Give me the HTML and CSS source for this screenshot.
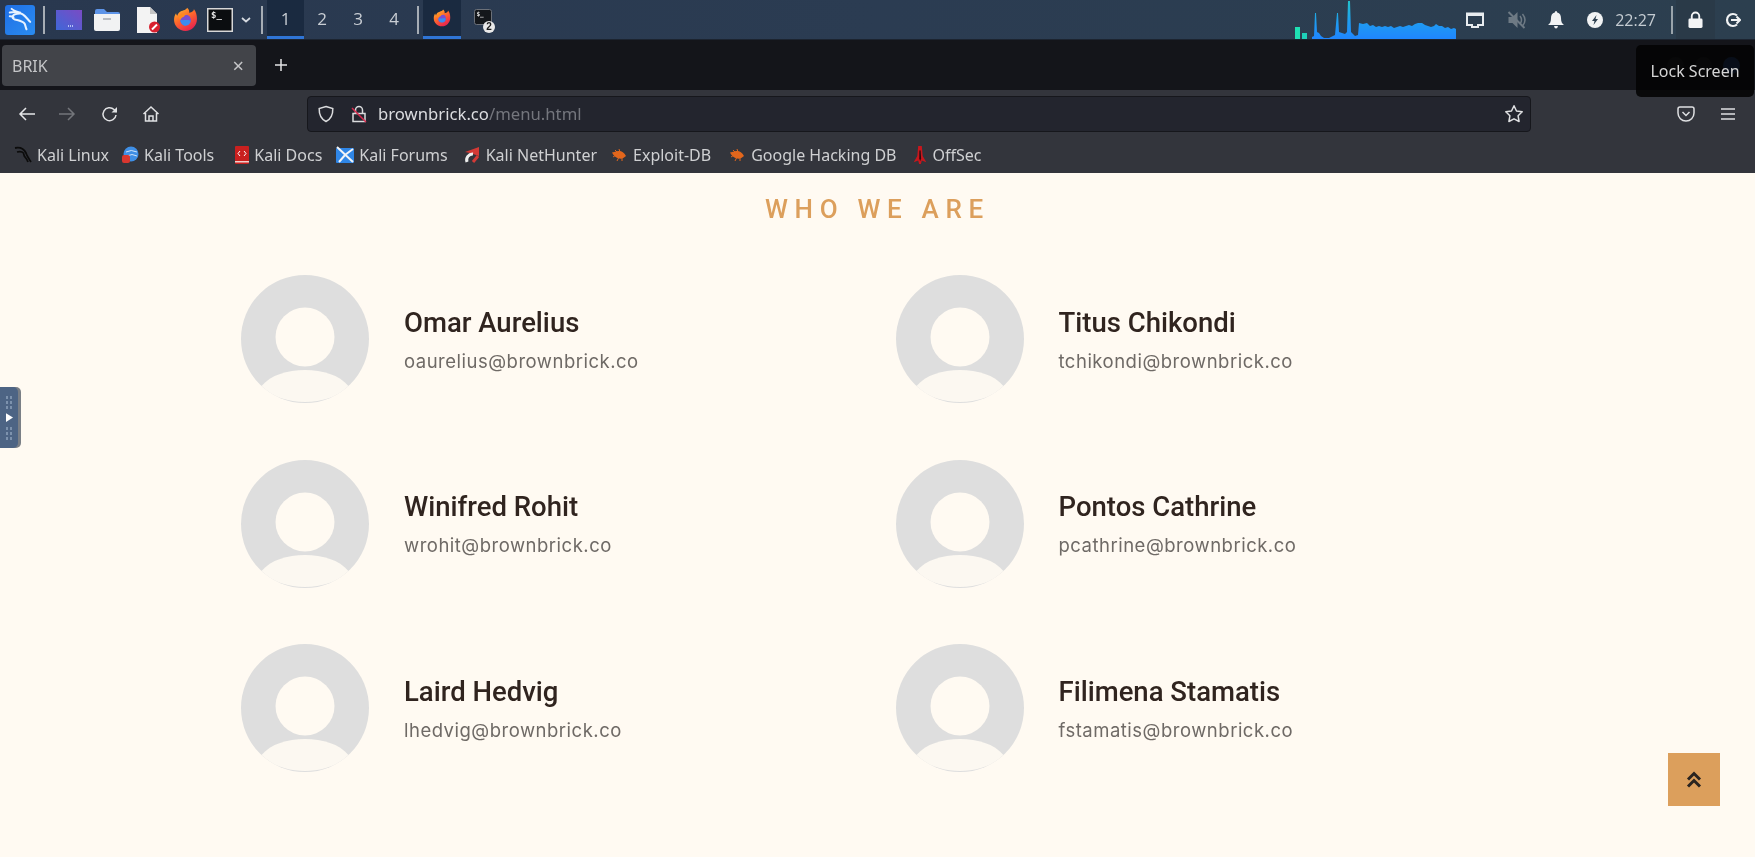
FILE: index.html
```html
<!DOCTYPE html>
<html lang="en">
<head>
<meta charset="utf-8">
<title>BRIK</title>
<link rel="stylesheet" href="styles.css">
</head>
<body>
<svg class="defs" width="0" height="0" aria-hidden="true">
  <defs>
    <linearGradient id="ffbody" x1="0" y1="0" x2="0.6" y2="1"><stop offset="0" stop-color="#ffc52e"/><stop offset=".5" stop-color="#ff6b2a"/><stop offset="1" stop-color="#e8254f"/></linearGradient>
    <linearGradient id="graphblue" gradientUnits="userSpaceOnUse" x1="0" y1="0" x2="0" y2="39"><stop offset="0" stop-color="#22c3c9"/><stop offset=".55" stop-color="#1f9df0"/><stop offset="1" stop-color="#1f86ff"/></linearGradient>
    <symbol id="firefox" viewBox="0 0 24 24">
      <path fill="url(#ffbody)" d="M12 23C5.9 23 1 18.2 1 12.2c0-2.2.7-4.4 1.9-6.1.2 1 .6 1.8 1.2 2.4.3-1.5 1.2-2.8 2.4-3.7C8.300 3.500 12.500 3.400 13.500.8c2 1.500 2.300 3.300 2 4.700C18.500 5.400 20.300 3.500 20 2c2.300 2.700 3 6 3 9.500C23 18 18 23 12 23z"/>
      <circle cx="12" cy="12.500" r="5.200" fill="#7a4fd0"/>
      <path fill="#3b8cf0" d="M7 12c1.500 1 3.500.5 5 .5s3.500-.5 5 .5c-.3 3-2.300 5-5 5s-4.800-2.500-5-6z"/>
      <path fill="#ff8a1f" d="M5.500 9c2-2.500 6-3.500 9-2-2 .1-3.500 1-4 2.300-1.800.5-3.300 1.800-3.500 3.700-.5-1.300-1.600-2.600-1.500-4z"/>
    </symbol>
    <symbol id="avatar" viewBox="0 0 128 128">
      <circle cx="64" cy="64" r="64" fill="#dedede"/>
      <circle cx="64" cy="62" r="29.500" fill="#fffaf2"/>
      <path fill="#fcf8f1" d="M20.500 111C30 100 46 95 64 95s34 5 43.500 16C96 122 81 127 64 127s-32-5-43.500-16z"/>
    </symbol>
    <symbol id="bug" viewBox="0 0 18 18">
      <path fill="#e2661c" d="M2 6.500 8 5c3-.5 6 1 8 5-2 2-4.500 3-7 2.500C6 12 3.500 9.500 2 6.500z"/>
      <path fill="none" stroke="#e2661c" stroke-width="1" d="M5 4 7 6M9 3l1 3M3 11l3-2M7 15l2-4M12 15l0-3"/>
    </symbol>
  </defs>
</svg>

<header class="taskbar">
  <div class="task-left">
    <span class="kali-start">
      <svg class="ico-kali" viewBox="0 0 28 28"><path fill="none" stroke="#e8f3ff" stroke-width="2.200" stroke-linecap="round" d="M3 6c5-1 10-1 14 2 3 2 5 5 8 8M14 7c-5 0-8 1-8 4 0 4 9 2 13 7 1 2 1 4 2 6M5 2c2 2 6 3 9 4M3 10c2 0 3 0 4 1"/></svg>
    </span>
    <span class="sep sep-start"></span>
    <svg class="launch launch-desk" viewBox="0 0 26 20"><defs><linearGradient id="deskg" x1="0" y1="1" x2="1" y2="0"><stop offset="0" stop-color="#3f67d8"/><stop offset="1" stop-color="#7a4bc4"/></linearGradient></defs><rect width="26" height="20" fill="url(#deskg)"/><path d="M12 16h5" stroke="#cfe0ff" stroke-dasharray="1 1" stroke-width="1.500"/></svg>
    <svg class="launch launch-folder" viewBox="0 0 26 22"><path fill="#5d94e8" d="M1 2q0-2 2-2h7l3 3h11q2 0 2 2v2H1z"/><path fill="#f1f2f3" d="M0 5h26v15q0 2-2 2H2q-2 0-2-2z"/><path d="M9 10h8" stroke="#b9bcc1" stroke-width="2"/></svg>
    <svg class="launch launch-doc" viewBox="0 0 24 26"><path fill="#f3f3f3" d="M1 0h13l7 7v19H1z"/><path fill="#c4c4c4" d="M14 0l7 7h-7z"/><circle cx="18.500" cy="20" r="5.500" fill="#d8202f"/><path d="M16 22.500l5-5" stroke="#fff" stroke-width="2"/></svg>
    <svg class="launch launch-ff"><use href="#firefox"/></svg>
    <svg class="launch launch-term" viewBox="0 0 26 24"><rect x=".75" y=".75" width="24.500" height="22.500" fill="#0b0d10" stroke="#d8d8d8" stroke-width="1.500"/><text x="4" y="10" class="term-glyph">$_</text></svg>
    <svg class="chev" viewBox="0 0 10 6"><path fill="none" stroke="#d6dae0" stroke-width="1.700" d="M1 1l4 3.500L9 1"/></svg>
    <span class="sep sep-work"></span>
    <div class="workspaces">
      <span class="ws ws-active">1</span><span class="ws">2</span><span class="ws">3</span><span class="ws">4</span>
    </div>
    <span class="sep sep-task"></span>
    <span class="task task-active"><svg class="task-ff"><use href="#firefox"/></svg></span>
    <span class="task task-term">
      <svg class="task-term-ico" viewBox="0 0 18 18"><rect x=".5" y=".5" width="17" height="15" rx="2" fill="#14171b" stroke="#6b7078"/><text x="2.500" y="7" class="term-glyph-sm">$_</text></svg>
      <span class="badge">2</span>
    </span>
  </div>
  <div class="task-right">
    <svg class="graph" viewBox="0 0 161 39" preserveAspectRatio="none">
      <rect x="0" y="27" width="5" height="12" fill="#1fe0b4"/>
      <rect x="7" y="33" width="5" height="6" fill="#1ed0ba"/>
      <path fill="url(#graphblue)" d="M17 39V37L19 36 20 13H21L22 32 24 33 26 36 29 38H34L36 37 40 35 42 13H43L44 32 50 34 52 32 53 1H55L56 32 60 36 63 35 64 23 68 24 72 23 75 26 78 25 81 27 84 26 87 27 90 26 93 27 96 26 99 28 102 27 105 26 108 27 111 26 114 25 117 26 120 24 123 23 127 23 130 25 133 26 136 27 139 26 141 24 144 26 147 26 150 28 153 27 156 29 159 28 161 29V39z"/>
    </svg>
    <svg class="tray tray-net" viewBox="0 0 18 16"><path fill="none" stroke="#e8ecef" stroke-width="2" d="M1 1.500h16V13h-5v2H6v-2H1z"/><path fill="#e8ecef" d="M1 1h16v3H1z"/></svg>
    <svg class="tray tray-mute" viewBox="0 0 20 20"><path fill="#6e7a84" d="M2 7h4l5-5v16l-5-5H2z"/><path d="M2 2l16 16" stroke="#6e7a84" stroke-width="2"/><path d="M13.500 6q3 4 0 8M16 4q5 6 0 12" fill="none" stroke="#6e7a84" stroke-width="1.500"/></svg>
    <svg class="tray tray-bell" viewBox="0 0 16 18"><path fill="#f1f3f4" d="M8 0q1.200 0 1.200 1.500C12 2.200 13 4.500 13 7c0 4 1 5.500 3 7H0c2-1.500 3-3 3-7 0-2.500 1-4.800 3.800-5.500Q6.800 0 8 0zM6 15h4q-.5 2.500-2 2.500T6 15z"/></svg>
    <svg class="tray tray-power" viewBox="0 0 16 16"><circle cx="8" cy="8" r="8" fill="#f1f3f4"/><path fill="#2e4050" d="M9.500 3 5 9h2.500L6.500 13 11 7H8.500z"/></svg>
    <span class="clock">22:27</span>
    <span class="sep sep-clock"></span>
    <span class="lock-cell"><svg class="tray-lock" viewBox="0 0 16 18"><path fill="none" stroke="#f3f4f5" stroke-width="2" d="M4 8V5a4 4 0 0 1 8 0v3"/><rect x="0.500" y="7.500" width="15" height="10" rx="1.500" fill="#f3f4f5"/></svg></span>
    <svg class="tray-logout" viewBox="0 0 16 16"><path fill="none" stroke="#f1f3f4" stroke-width="2.200" d="M12 3.500A6 6 0 1 0 12 12.500"/><path d="M6 8h9M11.500 4.500 15 8l-3.500 3.500" fill="none" stroke="#f1f3f4" stroke-width="2"/></svg>
  </div>
</header>

<div class="tabbar">
  <div class="tab"><span class="tab-title">BRIK</span><span class="tab-close">×</span></div>
  <svg class="tab-new" viewBox="0 0 14 14"><path d="M7 1v12M1 7h12" stroke="#e3e4e6" stroke-width="1.500"/></svg>
  <div class="win-controls"><span class="win-btn"></span><span class="win-btn"></span><span class="win-btn win-btn-close"></span></div>
</div>

<div class="navbar">
  <svg class="nav nav-back" viewBox="0 0 18 16"><path d="M17 8H2M8 2 2 8l6 6" fill="none" stroke="#e6e7e9" stroke-width="1.500"/></svg>
  <svg class="nav nav-fwd" viewBox="0 0 18 16"><path d="M1 8h15M10 2l6 6-6 6" fill="none" stroke="#74767b" stroke-width="1.500"/></svg>
  <svg class="nav nav-reload" viewBox="0 0 18 18"><path d="M15 10a6.500 6.500 0 1 1-2-5.500l2.500 2.500" fill="none" stroke="#e0e1e3" stroke-width="1.500"/><path d="M16 2v5.500h-5.500z" fill="#e0e1e3"/></svg>
  <svg class="nav nav-home" viewBox="0 0 18 18"><path d="M1.500 9 9 2l7.500 7M3.500 8v8h11V8M7 16v-5h4v5" fill="none" stroke="#e0e1e3" stroke-width="1.500"/></svg>
  <div class="urlbar">
    <svg class="url-shield" viewBox="0 0 16 18"><path d="M8 1.500 14.800 3.500c.2 6-1.800 10.500-6.800 13-5-2.500-7-7-6.800-13z" fill="none" stroke="#dadbdd" stroke-width="1.500"/></svg>
    <svg class="url-lock" viewBox="0 0 16 18"><path d="M4.500 8V5a3.500 3.500 0 0 1 7 0v3M2 8.500h12v8H2z" fill="none" stroke="#dadbdd" stroke-width="1.500"/><path d="M1 3l14 14" stroke="#d82a4e" stroke-width="1.500"/></svg>
    <span class="url-text"><span class="url-host">brownbrick.co</span><span class="url-path">/menu.html</span></span>
    <svg class="url-star" viewBox="0 0 20 19"><path d="M10 1.800 12.500 7l5.700.8-4.100 4 1 5.700-5.100-2.700-5.100 2.700 1-5.700-4.100-4L7.500 7z" fill="none" stroke="#dfe0e2" stroke-width="1.500" stroke-linejoin="round"/></svg>
  </div>
  <svg class="nav nav-pocket" viewBox="0 0 18 16"><path d="M1 3q0-2 2-2h12q2 0 2 2v4a8 8 0 0 1-16 0z" fill="none" stroke="#dfe0e2" stroke-width="1.500"/><path d="M5.500 6 9 9.500 12.500 6" fill="none" stroke="#dfe0e2" stroke-width="1.500"/></svg>
  <svg class="nav nav-menu" viewBox="0 0 16 14"><path d="M1 2h14M1 7h14M1 12h14" stroke="#dfe0e2" stroke-width="1.500"/></svg>
</div>

<nav class="bookmarks">
  <a class="bm bm-linux"><svg class="bm-ico" viewBox="0 0 18 18"><path d="M1 2c5-1 9 1 11 5 1 3 3 6 5 9M3 6c4-1 7 0 7 3 0 2 3 3 4 7" fill="none" stroke="#0c0c0c" stroke-width="1.800"/></svg>Kali Linux</a>
  <a class="bm bm-tools"><svg class="bm-ico" viewBox="0 0 18 18"><circle cx="10" cy="8" r="7.500" fill="#3f8fe6"/><path d="M5 6q5-3 11 0M6 10q5-3 10 0" stroke="#cfe4fb" fill="none"/><rect x="1" y="9" width="8" height="8" rx="2" fill="#d9362f"/></svg>Kali Tools</a>
  <a class="bm bm-docs"><svg class="bm-ico-narrow" viewBox="0 0 14 18"><rect width="14" height="18" rx="1" fill="#c9201f"/><rect y="15" width="14" height="1.500" fill="#f1d0cc"/><path d="M5 5 3 7.500 5 10M9 5l2 2.500L9 10" stroke="#fff" fill="none"/></svg>Kali Docs</a>
  <a class="bm bm-forums"><svg class="bm-ico" viewBox="0 0 18 18"><rect y="2" width="18" height="15" rx="1" fill="#2f86e6"/><path d="M1 1 17 16M17 3l-8 6-6 7" stroke="#f1f4f8" stroke-width="2" fill="none"/></svg>Kali Forums</a>
  <a class="bm bm-hunter"><svg class="bm-ico" viewBox="0 0 18 18"><path d="M2 6 16 1v9L7 7z" fill="#d43a36"/><path d="M4 16a6 6 0 0 1 6-8" stroke="#eee" stroke-width="3" fill="none"/><path d="M10 16l5-6" stroke="#d43a36" stroke-width="3"/></svg>Kali NetHunter</a>
  <a class="bm bm-exploit"><svg class="bm-ico-bug"><use href="#bug"/></svg>Exploit-DB</a>
  <a class="bm bm-ghdb"><svg class="bm-ico-bug"><use href="#bug"/></svg>Google Hacking DB</a>
  <a class="bm bm-offsec"><svg class="bm-ico-narrow" viewBox="0 0 14 20"><path d="M5 0h4l1 11 4 7-5-2-1 4h-2l-1-4-5 2 4-7z" fill="#c8171d"/><path d="M6.300 5h1.400l.5 9-1 3-1-3z" fill="#2a0c0e"/></svg>OffSec</a>
</nav>

<main class="page">
  <h2 class="page-title">WHO WE ARE</h2>
  <section class="team">
    <article class="member"><svg class="avatar"><use href="#avatar"/></svg><div><h3 class="name">Omar Aurelius</h3><p class="mail">oaurelius@brownbrick.co</p></div></article>
    <article class="member"><svg class="avatar"><use href="#avatar"/></svg><div><h3 class="name">Titus Chikondi</h3><p class="mail">tchikondi@brownbrick.co</p></div></article>
    <article class="member"><svg class="avatar"><use href="#avatar"/></svg><div><h3 class="name">Winifred Rohit</h3><p class="mail">wrohit@brownbrick.co</p></div></article>
    <article class="member"><svg class="avatar"><use href="#avatar"/></svg><div><h3 class="name">Pontos Cathrine</h3><p class="mail">pcathrine@brownbrick.co</p></div></article>
    <article class="member"><svg class="avatar"><use href="#avatar"/></svg><div><h3 class="name">Laird Hedvig</h3><p class="mail">lhedvig@brownbrick.co</p></div></article>
    <article class="member"><svg class="avatar"><use href="#avatar"/></svg><div><h3 class="name">Filimena Stamatis</h3><p class="mail">fstamatis@brownbrick.co</p></div></article>
  </section>
</main>

<a class="to-top"><svg viewBox="0 0 16 18"><path d="M2 8.500l6-6 6 6M2 15.500l6-6 6 6" fill="none" stroke="#2a2420" stroke-width="3"/></svg></a>

<div class="side-handle">
  <span class="dots"></span>
  <svg class="side-arrow" viewBox="0 0 8 10"><path d="M0 0l8 5-8 5z" fill="#fff"/></svg>
  <span class="dots"></span>
</div>

<div class="tooltip">Lock Screen</div>
</body>
</html>
```
FILE: styles.css
```css
* { box-sizing: border-box; }
html, body { margin: 0; height: 100%; }
body {
  width: 1755px;
  height: 857px;
  overflow: hidden;
  display: flex;
  flex-direction: column;
  font-family: "Noto Sans", sans-serif;
  background: #fffaf2;
  position: relative;
  filter: blur(0.4px);
}
.defs { position: absolute; }
svg { display: block; flex: none; }

/* desktop panel */
.taskbar {
  height: 40px;
  flex: none;
  display: flex;
  justify-content: space-between;
  background: linear-gradient(90deg, #29384f 0%, #2b3c52 50%, #2c3f4f 100%);
  border-bottom: 1px solid #1c2430;
}
.task-left, .task-right { display: flex; align-items: center; }
.kali-start {
  width: 30px; height: 30px; margin-left: 5px;
  background: linear-gradient(135deg, #1f6fe6, #2a8cf0);
  display: flex; align-items: center; justify-content: center;
  border-radius: 3px;
}
.ico-kali { width: 26px; height: 26px; }
.sep { width: 2px; height: 28px; background: #a6adb5; }
.sep-start { margin-left: 8px; }
.launch-desk { width: 26px; height: 20px; margin-left: 11px; }
.launch-folder { width: 26px; height: 22px; margin-left: 12px; }
.launch-doc { width: 24px; height: 26px; margin-left: 16px; }
.launch-ff { width: 25px; height: 25px; margin-left: 13px; }
.launch-term { width: 26px; height: 24px; margin-left: 9px; }
.term-glyph { font: 700 9px "DejaVu Sans Mono", monospace; fill: #e8e8e8; }
.term-glyph-sm { font: 700 6px "DejaVu Sans Mono", monospace; fill: #e8e8e8; }
.chev { width: 10px; height: 6px; margin-left: 8px; }
.sep-work { margin-left: 10px; }
.workspaces { display: flex; height: 39px; margin-left: 4px; }
.ws {
  width: 36px; display: flex; align-items: center; justify-content: center;
  font: 17px "Open Sans", sans-serif; color: #c9ced4;
  border-bottom: 3px solid transparent;
}
.ws-active { background: #1a2a40; border-bottom-color: #2f75d6; width: 37px; }
.sep-task { margin-left: 5px; }
.task {
  height: 39px; display: flex; align-items: center; justify-content: center;
  position: relative; border-bottom: 3px solid transparent;
}
.task-active { width: 38px; margin-left: 4px; background: #1a2a40; border-bottom-color: #2f75d6; }
.task-ff { width: 18px; height: 18px; }
.task-term { width: 22px; margin-left: 11px; }
.task-term-ico { width: 18px; height: 18px; }
.badge {
  position: absolute; right: -1px; bottom: 3px; width: 12px; height: 12px;
  border-radius: 50%; background: #e9e9e9; color: #1a1a1a;
  font: 700 10px/12px "Liberation Sans", sans-serif; text-align: center;
}
.graph { width: 161px; height: 39px; }
.tray-net { width: 18px; height: 16px; margin-left: 10px; }
.tray-mute { width: 21px; height: 20px; margin-left: 22px; }
.tray-bell { width: 16px; height: 18px; margin-left: 21px; }
.tray-power { width: 16px; height: 16px; margin-left: 23px; }
.clock { font: 16px "Open Sans", sans-serif; color: #c5ccd2; margin-left: 12px; }
.sep-clock { margin-left: 15px; background: #9aa4ab; }
.lock-cell {
  width: 39px; height: 39px; margin-left: 3px; background: #2a3a48;
  display: flex; align-items: center; justify-content: center;
}
.tray-lock { width: 15px; height: 18px; }
.tray-logout { width: 16px; height: 16px; margin-left: 10px; margin-right: 14px; }

/* browser chrome */
.tabbar {
  height: 50px; flex: none; display: flex; align-items: center;
  background: #14151a; padding: 0 15px 0 2px;
}
.tab {
  width: 254px; height: 41px; border-radius: 4px; background: #424449;
  display: flex; align-items: center; justify-content: space-between;
  padding: 2px 12px 0 10px;
  font-size: 16px; color: #c4c5c7;
}
.tab-close { font-size: 20px; color: #c4c5c7; line-height: 1; }
.tab-new { width: 14px; height: 14px; margin-left: 18px; }
.win-controls { display: flex; gap: 11px; margin-left: auto; }
.win-btn { width: 17px; height: 17px; border-radius: 50%; background: #2a2b31; }
.win-btn-close { background: #2b5fb0; }

.navbar {
  height: 44px; flex: none; display: flex; align-items: center;
  background: #33353c; padding: 3px 18px 0 18px;
}
.nav-back, .nav-fwd { width: 18px; height: 16px; }
.nav-fwd { margin-left: 22px; }
.nav-reload { width: 18px; height: 18px; margin-left: 25px; }
.nav-home { width: 18px; height: 18px; margin-left: 23px; }
.urlbar {
  width: 1224px; height: 36px; margin-left: 147px;
  background: #23252e; border: 1px solid #16171c; border-radius: 4px;
  display: flex; align-items: center; padding: 0 6px 0 10px;
}
.url-shield { width: 16px; height: 18px; }
.url-lock { width: 16px; height: 18px; margin-left: 17px; }
.url-text { margin-left: 11px; font-size: 16.700px; flex: 1; }
.url-host { color: #dcdde0; }
.url-path { color: #74767d; }
.url-star { width: 20px; height: 19px; }
.nav-pocket { width: 18px; height: 16px; margin-left: 146px; }
.nav-menu { width: 16px; height: 14px; margin-left: 25px; }

.bookmarks {
  height: 39px; flex: none; display: flex; align-items: center;
  background: #33353c; padding: 3px 0 0 14px;
  font-size: 16px; color: #cfd0d2;
}
.bm { display: flex; align-items: center; gap: 5px; }
.bm-tools { margin-left: 12px; }
.bm-docs { margin-left: 21px; }
.bm-forums { margin-left: 14px; }
.bm-hunter { margin-left: 15px; }
.bm-exploit { margin-left: 13px; }
.bm-ghdb { margin-left: 17px; }
.bm-offsec { margin-left: 17px; }
.bm-ico { width: 18px; height: 18px; }
.bm-ico-narrow { width: 14px; height: 18px; }
.bm-ico-bug { width: 18px; height: 18px; }

/* page */
.page { flex: 1; background: #fffaf2; padding: 21px 0 0 241px; min-height: 0; }
.page-title {
  margin: 0 0 0 -241px;
  text-align: center;
  font: 500 26px/30px Roboto, sans-serif;
  letter-spacing: 6.700px;
  color: #dc9f5c;
}
.team {
  display: grid;
  grid-template-columns: 654.500px 1fr;
  row-gap: 56.500px;
  margin-top: 51px;
}
.member { display: flex; align-items: center; gap: 35px; }
.avatar { width: 128px; height: 128px; }
.name {
  margin: 0 0 9px;
  font: 500 27.500px/34px Roboto, sans-serif;
  color: #30241f;
}
.mail {
  margin: 0;
  font: 400 18.500px/24px Inter, sans-serif;
  letter-spacing: 0.500px;
  color: #6f6a66;
}
.to-top {
  position: absolute; left: 1668px; top: 753px; width: 52px; height: 53px;
  background: #dc9f5c;
  display: flex; align-items: center; justify-content: center;
}
.to-top svg { width: 16px; height: 18px; }
.side-handle {
  position: absolute; left: 0; top: 387px; width: 18px; height: 61px;
  background: #4d6484;
  border-radius: 0 5px 5px 0;
  box-shadow: 3px 0 0 #7a7f86;
  display: flex; flex-direction: column; align-items: center; justify-content: center; gap: 4px;
}
.dots {
  width: 8px; height: 14px;
  background-image: radial-gradient(#7d92ad 1.200px, transparent 1.300px);
  background-size: 4px 5px;
}
.side-arrow { width: 7px; height: 9px; }
.tooltip {
  position: absolute; left: 1636px; top: 45px; width: 118px; height: 52px;
  background: rgba(3, 3, 3, 0.88); border-radius: 5px;
  display: flex; align-items: center; justify-content: center;
  color: #d5d5d5; font-size: 16px;
}
```
